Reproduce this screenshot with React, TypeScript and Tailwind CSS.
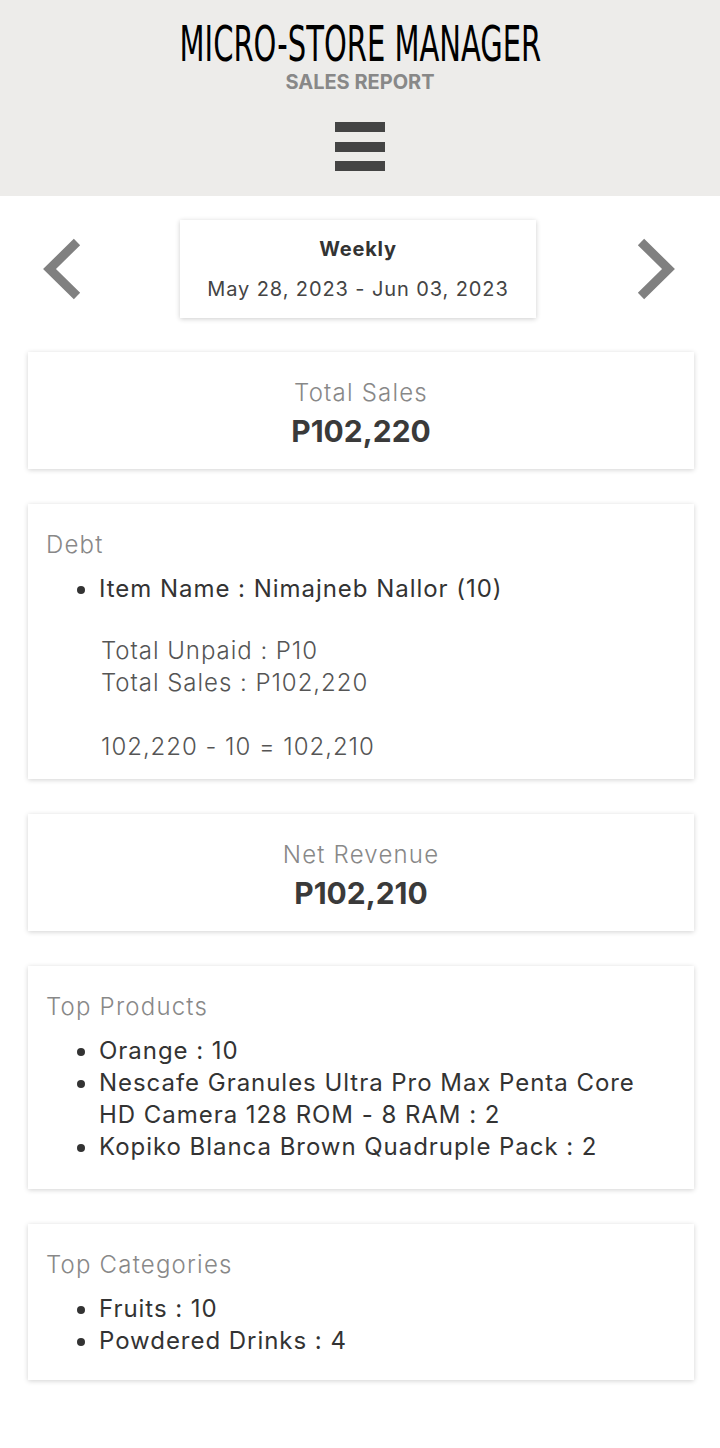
import React from "react";

function Chevron({ dir }: { dir: "left" | "right" }) {
  const pts = dir === "left" ? "34,4 6.5,31 34,58" : "6,4 33.5,31 6,58";
  return (
    <svg width="40" height="62" viewBox="0 0 40 62" fill="none">
      <polyline points={pts} stroke="#808080" strokeWidth="9" strokeLinejoin="miter" strokeLinecap="butt" />
    </svg>
  );
}

function Card({ children, className = "" }: { children: React.ReactNode; className?: string }) {
  return (
    <div className={`bg-white shadow-[0_1px_5px_rgba(0,0,0,0.18)] ${className}`}>{children}</div>
  );
}

export default function App() {
  return (
    <div className="min-h-[1448px] bg-white font-['Inter','Noto_Sans',sans-serif] text-[#333]">
      <header className="bg-[#edecea] h-[196px] flex flex-col items-center pt-[21px]">
        <h1 className="text-[50px] leading-[46px] font-['Liberation_Sans_Narrow','DejaVu_Sans_Condensed',sans-serif] text-black scale-x-[0.645] whitespace-nowrap">
          MICRO-STORE MANAGER
        </h1>
        <p className="mt-[3px] text-[20px] leading-[24px] font-bold text-[#888]">SALES REPORT</p>
        <button className="mt-[28px] flex flex-col gap-[9.5px]">
          <span className="block w-[50px] h-[10px] bg-[#444]" />
          <span className="block w-[50px] h-[10px] bg-[#444]" />
          <span className="block w-[50px] h-[10px] bg-[#444]" />
        </button>
      </header>

      <div className="flex items-center justify-between pl-[43px] pr-[45px] pt-[24px]">
        <Chevron dir="left" />
        <div className="w-[356px] h-[98px] bg-white shadow-[0_1px_5px_rgba(0,0,0,0.2)] flex flex-col items-center justify-center -translate-x-[1px]">
          <p className="text-[20px] leading-[28px] font-bold tracking-[0.04em] text-[#333]">Weekly</p>
          <p className="mt-[12px] text-[20px] leading-[28px] tracking-[0.045em] text-[#444]">May 28, 2023 - Jun 03, 2023</p>
        </div>
        <Chevron dir="right" />
      </div>

      <div className="ml-[28px] mr-[26px] mt-[34px] flex flex-col gap-[35px]">
        <Card className="pt-[25px] pb-[20px] text-center">
          <p className="text-[24px] leading-[32px] font-light tracking-[0.05em] text-[#888]">Total Sales</p>
          <p className="mt-[4px] text-[30px] leading-[36px] font-bold text-[#3a3a3a]">P102,220</p>
        </Card>

        <Card className="pt-[25px] pb-[16px] px-[18px]">
          <p className="text-[24px] leading-[32px] font-light tracking-[0.05em] text-[#888]">Debt</p>
          <ul className="mt-[12px] list-disc pl-[53px] text-[24px] leading-[32px] tracking-[0.04em] text-[#333]">
            <li>Item Name : Nimajneb Nallor (10)</li>
          </ul>
          <div className="mt-[30px] pl-[55px] text-[24px] leading-[32px] font-light tracking-[0.04em] text-[#555]">
            <p>Total Unpaid : P10</p>
            <p>Total Sales : P102,220</p>
            <p className="mt-[32px]">102,220 - 10 = 102,210</p>
          </div>
        </Card>

        <Card className="pt-[25px] pb-[20px] text-center">
          <p className="text-[24px] leading-[32px] font-light tracking-[0.05em] text-[#888]">Net Revenue</p>
          <p className="mt-[4px] text-[30px] leading-[36px] font-bold text-[#3a3a3a]">P102,210</p>
        </Card>

        <Card className="pt-[25px] pb-[26px] px-[18px]">
          <p className="text-[24px] leading-[32px] font-light tracking-[0.05em] text-[#888]">Top Products</p>
          <ul className="mt-[12px] list-disc pl-[53px] text-[24px] leading-[32px] tracking-[0.04em] text-[#333]">
            <li>Orange : 10</li>
            <li>Nescafe Granules Ultra Pro Max Penta Core HD Camera 128 ROM - 8 RAM : 2</li>
            <li>Kopiko Blanca Brown Quadruple Pack : 2</li>
          </ul>
        </Card>

        <Card className="pt-[25px] pb-[23px] px-[18px]">
          <p className="text-[24px] leading-[32px] font-light tracking-[0.05em] text-[#888]">Top Categories</p>
          <ul className="mt-[12px] list-disc pl-[53px] text-[24px] leading-[32px] tracking-[0.04em] text-[#333]">
            <li>Fruits : 10</li>
            <li>Powdered Drinks : 4</li>
          </ul>
        </Card>
      </div>
    </div>
  );
}
